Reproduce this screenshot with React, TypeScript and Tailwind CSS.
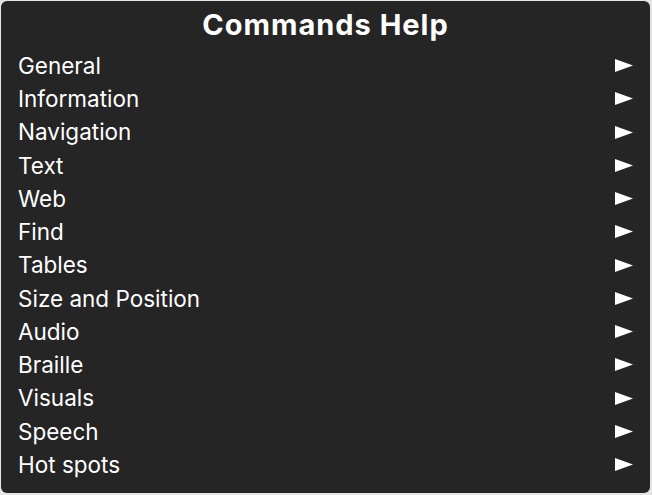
const items = [
  "General",
  "Information",
  "Navigation",
  "Text",
  "Web",
  "Find",
  "Tables",
  "Size and Position",
  "Audio",
  "Braille",
  "Visuals",
  "Speech",
  "Hot spots",
];

function Arrow() {
  return (
    <svg width="18" height="13" viewBox="0 0 18 13" className="shrink-0">
      <path d="M0 0 L18 6.5 L0 13 Z" fill="#ffffff" />
    </svg>
  );
}

export default function App() {
  return (
    <div className="h-[495px] w-[652px] bg-[#e5e5e5] p-px font-['Inter',sans-serif]">
      <div className="flex h-[492px] w-[649px] flex-col rounded-[6px] bg-[#252525] text-white">
        {/* title */}
        <h1 className="pt-[7px] text-center text-[29px] leading-[34px] font-bold tracking-[1px]">
          Commands Help
        </h1>
        <ul className="mt-[7px] flex flex-col">
          {items.map((item) => (
            <li
              key={item}
              className="flex h-[33.25px] items-center justify-between pr-[17px] pl-[17px] text-[22.5px]"
            >
              <span>{item}</span>
              <Arrow />
            </li>
          ))}
        </ul>
      </div>
    </div>
  );
}
